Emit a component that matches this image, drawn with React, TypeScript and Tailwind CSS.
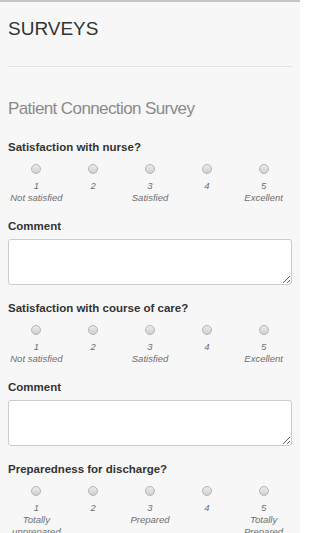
const font = { fontFamily: '"Liberation Sans", Arial, sans-serif' };

type Question = {
  id: string;
  label: string;
  anchors: Record<number, string[]>;
};

const questions: Question[] = [
  {
    id: "nurse",
    label: "Satisfaction with nurse?",
    anchors: { 1: ["Not satisfied"], 3: ["Satisfied"], 5: ["Excellent"] },
  },
  {
    id: "care",
    label: "Satisfaction with course of care?",
    anchors: { 1: ["Not satisfied"], 3: ["Satisfied"], 5: ["Excellent"] },
  },
  {
    id: "discharge",
    label: "Preparedness for discharge?",
    anchors: { 1: ["Totally", "unprepared"], 3: ["Prepared"], 5: ["Totally", "Prepared"] },
  },
];

function RatingRow({ q }: { q: Question }) {
  return (
    <div className="grid grid-cols-5 mt-[10px]">
      {[1, 2, 3, 4, 5].map(n => (
        <label key={n} className="flex flex-col items-center text-center">
          <input
            type="radio"
            name={q.id}
            className="appearance-none m-0 w-[10px] h-[10px] rounded-full border border-[#b4b4b4] bg-linear-to-b from-[#ececec] to-[#cfcfcf]"
          />
          <span className="mt-[6px] text-[9.5px] leading-[12px] italic text-[#6e6e6e]">{n}</span>
          {q.anchors[n]?.map(line => (
            <span key={line} className="whitespace-nowrap text-[9.5px] leading-[12px] italic text-[#6e6e6e]">
              {line}
            </span>
          ))}
        </label>
      ))}
    </div>
  );
}

function QuestionBlock({ q, first }: { q: Question; first: boolean }) {
  return (
    <div className={first ? "mt-[21px]" : "mt-[16.5px]"}>
      <div className="text-[11.5px] leading-[14px] font-bold text-[#333]">{q.label}</div>
      <RatingRow q={q} />
      <div className="mt-[14.5px] text-[11.5px] leading-[14px] font-bold text-[#333]">Comment</div>
      <textarea className="mt-[6px] block w-full h-[46px] bg-white border border-[#cccccc] rounded-[3px] p-1 text-xs" />
    </div>
  );
}

export default function App() {
  return (
    <div
      style={font}
      className="w-[300px] min-h-screen bg-[#f7f7f7] border-t-2 border-[#c6c6c6] px-2 pt-[16px] pb-6"
    >
      <h1 className="text-[19px] leading-[22px] text-[#333]">SURVEYS</h1>
      <hr className="mt-[26px] border-0 border-t border-[#e2e2e2]" />
      <h2 className="mt-[32px] text-[17px] leading-[20px] tracking-[-0.6px] text-[#8a8a8a]">
        Patient Connection Survey
      </h2>
      {questions.map((q, i) => (
        <QuestionBlock key={q.id} q={q} first={i === 0} />
      ))}
    </div>
  );
}
